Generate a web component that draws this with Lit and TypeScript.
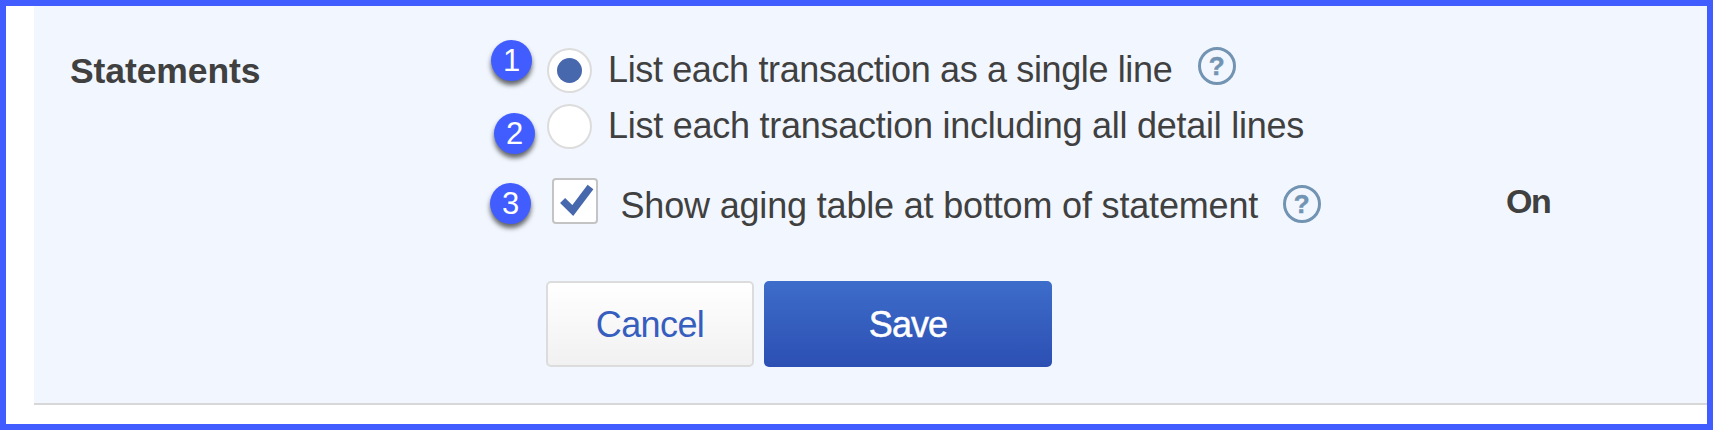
import { LitElement, html, css } from "lit";
import { customElement, property } from "lit/decorators.js";

@customElement("step-badge")
class StepBadge extends LitElement {
  static styles = css`
    :host {
      position: absolute;
      width: 41px;
      height: 41px;
      border-radius: 50%;
      background: #415dff;
      color: #fff;
      font: 31px/41px "Liberation Sans", sans-serif;
      text-align: center;
      box-shadow: 0 4px 5px rgba(0, 0, 0, 0.6);
    }
  `;
  render() {
    return html`<slot></slot>`;
  }
}

@customElement("help-icon")
class HelpIcon extends LitElement {
  static styles = css`
    :host {
      display: block;
      flex: none;
      box-sizing: border-box;
      width: 38px;
      height: 38px;
      border: 3px solid #7294b2;
      border-radius: 50%;
      color: #7294b2;
      font: bold 26px/32px "Liberation Sans", sans-serif;
      text-align: center;
      -webkit-text-stroke: 0.5px #7294b2;
    }
  `;
  render() {
    return html`?`;
  }
}

@customElement("radio-mark")
class RadioMark extends LitElement {
  @property({ type: Boolean }) checked = false;
  static styles = css`
    :host {
      display: grid;
      place-items: center;
      flex: none;
      box-sizing: border-box;
      width: 45px;
      height: 45px;
      border: 2px solid #dcdcdc;
      border-radius: 50%;
      background: #fff;
    }
    .dot {
      width: 25px;
      height: 25px;
      border-radius: 50%;
      background: #4868ae;
    }
  `;
  render() {
    return this.checked ? html`<span class="dot"></span>` : null;
  }
}

@customElement("app-root")
class AppRoot extends LitElement {
  static styles = css`
    :host {
      display: block;
      box-sizing: border-box;
      height: 430px;
      border: 6px solid #415dff;
      padding: 0 0 19px 28px;
      background: #fff;
      color: #404040;
      font: 36px/44px "Liberation Sans", Arial, sans-serif;
    }
    .panel {
      display: grid;
      grid-template-columns: 471px 965px 1fr;
      box-sizing: border-box;
      height: 399px;
      padding: 42px 0 0 36px;
      background: #f2f7ff;
      border-bottom: 2px solid #d7d7d7;
    }
    .title {
      margin: 1px 0 0;
      font: bold 35.5px/44px "Liberation Sans", Arial, sans-serif;
      letter-spacing: -0.1px;
    }
    .row {
      position: relative;
      display: flex;
      align-items: flex-start;
      margin-left: 6px;
      height: 45px;
      white-space: nowrap;
    }
    .row + .row { margin-top: 11px; }
    .row.check { margin-top: 29px; }
    .text { margin-left: 16px; letter-spacing: -0.37px; }
    .detail .text { letter-spacing: -0.26px; }
    .check .text { margin: 6px 0 0 22.5px; letter-spacing: -0.175px; }
    .help { margin: -1px 0 0 25.5px; }
    .check .help { margin: 7px 0 0 24.5px; }
    .one { left: -56px; top: -8px; }
    .two { left: -53px; top: 9px; }
    .three { left: -57px; top: 5px; }
    .box {
      display: block;
      box-sizing: border-box;
      width: 46px;
      height: 46px;
      margin-left: 5px;
      flex: none;
      border: 2px solid #c4c4c4;
      border-radius: 4px;
      background: #fff;
    }
    .actions { display: flex; gap: 10px; margin: 58px 0 0 5px; }
    .btn {
      box-sizing: border-box;
      height: 86px;
      padding: 2px 0 0;
      border-radius: 5px;
      font: 36px/44px "Liberation Sans", Arial, sans-serif;
      letter-spacing: -0.6px;
    }
    .cancel {
      width: 208px;
      border: 2px solid #dcdcdc;
      background: linear-gradient(#fff, #f1f1f1);
      color: #365ebf;
    }
    .save {
      width: 288px;
      border: 0;
      background: linear-gradient(#3d6dca, #2c4fb3);
      color: #fff;
      -webkit-text-stroke: 0.5px #fff;
      letter-spacing: -0.9px;
    }
    .value {
      margin-top: 131px;
      font-weight: bold;
      font-size: 34px;
      letter-spacing: -1.5px;
    }
  `;

  render() {
    return html`
      <section class="panel">
        <h2 class="title">Statements</h2>
        <div>
          <div class="row">
            <step-badge class="one">1</step-badge>
            <radio-mark checked></radio-mark>
            <span class="text">List each transaction as a single line</span>
            <help-icon class="help"></help-icon>
          </div>
          <div class="row detail">
            <step-badge class="two">2</step-badge>
            <radio-mark></radio-mark>
            <span class="text">List each transaction including all detail lines</span>
          </div>
          <div class="row check">
            <step-badge class="three">3</step-badge>
            <svg class="box" viewBox="0 0 42 42">
              <path d="M8.6 20.5L18.8 30.5L36.5 7" fill="none" stroke="#4868ae" stroke-width="7.2" />
            </svg>
            <span class="text">Show aging table at bottom of statement</span>
            <help-icon class="help"></help-icon>
          </div>
          <div class="actions">
            <button class="btn cancel">Cancel</button>
            <button class="btn save">Save</button>
          </div>
        </div>
        <div class="value">On</div>
      </section>
    `;
  }
}
